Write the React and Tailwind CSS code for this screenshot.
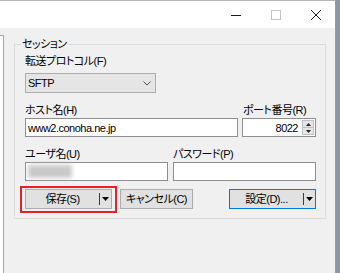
import React from "react";

function Arrow() {
  return (
    <svg width="7" height="4" viewBox="0 0 7 4" className="block">
      <path d="M0 0H7L3.5 4Z" fill="#000" />
    </svg>
  );
}

function SplitButton({ label, className }) {
  return (
    <div className={"flex h-[20px] w-[87px] bg-[#e1e1e1] border " + className}>
      <div className="flex-1 flex items-center justify-center">{label}</div>
      <div className="my-[3px] w-[1px] bg-[#3c3c3c]" />
      <div className="w-[11px] flex items-center justify-center">
        <Arrow />
      </div>
    </div>
  );
}

export default function App() {
  return (
    <div className="w-[340px] h-[273px] flex overflow-hidden bg-[#f0f0f0] text-[11px] leading-[16px] tracking-[-0.5px] text-black font-['Liberation_Sans','Noto_Sans_CJK_JP',sans-serif] [font-feature-settings:'palt']">
      <div className="w-[336px] flex flex-col border-t border-t-[#b5b5b5] border-r border-r-[#9a9a9a]">
        <div className="h-[27px] shrink-0 bg-white flex items-center justify-end pr-[14px] gap-[30px]">
          <svg width="10" height="10" viewBox="0 0 10 10" className="block">
            <path d="M0 5.5H10" stroke="#1a1a1a" strokeWidth="1" />
          </svg>
          <svg width="10" height="10" viewBox="0 0 10 10" className="block">
            <rect x="0.5" y="0.5" width="9" height="9" fill="none" stroke="#c4c4c4" strokeWidth="1" />
          </svg>
          <svg width="10" height="10" viewBox="0 0 10 10" className="block">
            <path d="M0 0L10 10M10 0L0 10" stroke="#1a1a1a" strokeWidth="1" />
          </svg>
        </div>
        <div className="flex flex-1">
          <div className="w-[4px] mt-[7px] bg-white border-t border-r border-[#a5a5a5]" />
          <div className="ml-[10px] mt-[16px]">
            <div className="relative w-[312px] border border-[#dcdcdc] pl-[10px] pr-[9px] pt-[8px] pb-[9px]">
              <span className="absolute left-[6px] top-[-9px] bg-[#f0f0f0] px-[1px]">セッション</span>

              <div>転送プロトコル(F)</div>
              <div className="mt-[4px] w-[131px] h-[20px] flex items-center justify-between pl-[2px] pr-[4px] border border-[#acacac] bg-[#e5e5e5]">
                <span>SFTP</span>
                <svg width="8" height="5" viewBox="0 0 8 5" className="block">
                  <path d="M0.5 0.5L4 4L7.5 0.5" fill="none" stroke="#505050" strokeWidth="1" />
                </svg>
              </div>

              <div className="mt-[9px] flex gap-[4px]">
                <div className="w-[213px]">
                  <div>ホスト名(H)</div>
                  <div className="h-[19px] flex items-center pl-[2px] bg-white border border-[#8e8e8e]">
                    www2.conoha.ne.jp
                  </div>
                </div>
                <div className="flex-1">
                  <div className="pl-[1px]">ポート番号(R)</div>
                  <div className="h-[19px] flex items-center justify-end pr-[1px] bg-white border border-[#8e8e8e]">
                    <span>8022</span>
                    <div className="ml-[4px] w-[12px] h-[15px] flex flex-col">
                      <div className="flex-1 flex items-center justify-center bg-[#e6e6e6] border border-[#c0c0c0]">
                        <svg width="5" height="3" viewBox="0 0 5 3" className="block">
                          <path d="M0 3H5L2.5 0Z" fill="#222" />
                        </svg>
                      </div>
                      <div className="flex-1 flex items-center justify-center bg-[#e6e6e6] border border-t-0 border-[#c0c0c0]">
                        <svg width="5" height="3" viewBox="0 0 5 3" className="block">
                          <path d="M0 0H5L2.5 3Z" fill="#222" />
                        </svg>
                      </div>
                    </div>
                  </div>
                </div>
              </div>

              <div className="mt-[9px] grid grid-cols-2 gap-[5px]">
                <div>
                  <div>ユーザ名(U)</div>
                  <div className="h-[19px] flex items-center pl-[2px] bg-white border border-[#8e8e8e]">
                    <div className="w-[44px] h-[13px] bg-[#c9c9c9] blur-[2px]" />
                  </div>
                </div>
                <div>
                  <div>パスワード(P)</div>
                  <div className="h-[19px] bg-white border border-[#8e8e8e]" />
                </div>
              </div>

              <div className="mt-[8px] flex items-center">
                <div className="relative">
                  <SplitButton label="保存(S)" className="border-[#adadad]" />
                  <div className="absolute left-[-5px] right-[-5px] top-[-3px] bottom-[-4px] border-2 border-[#e5202a]" />
                </div>
                <div className="ml-[8px] w-[73px] h-[20px] flex items-center justify-center bg-[#e1e1e1] border border-[#adadad]">
                  キャンセル(C)
                </div>
                <div className="ml-auto">
                  <SplitButton label="設定(D)..." className="border-[#0078d7]" />
                </div>
              </div>
            </div>
          </div>
        </div>
      </div>
      <div className="flex-1 bg-[#8d97a3]" />
    </div>
  );
}
